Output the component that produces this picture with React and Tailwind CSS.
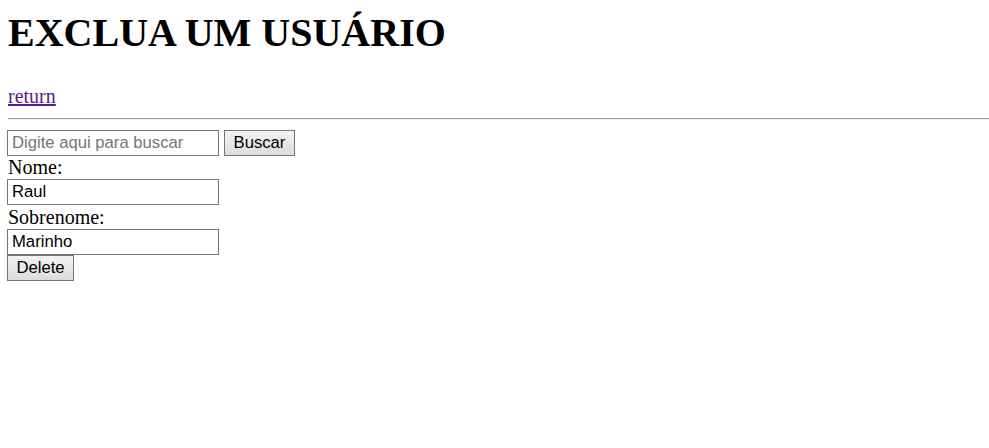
export default function App() {
  const serif = { fontFamily: '"Liberation Serif", "Times New Roman", serif' };
  const inputCls =
    "block box-border h-[26px] w-[212px] border border-[#767676] bg-white px-[4px] text-[16.67px] leading-none text-black outline-none placeholder:text-[#757575] font-['Liberation_Sans',Arial,sans-serif]";
  const btnCls =
    "box-border h-[26px] border border-[#767676] bg-[linear-gradient(#f2f2f2,#dcdcdc)] text-[16.67px] leading-none text-black font-['Liberation_Sans',Arial,sans-serif]";
  return (
    <div className="min-h-[448px] bg-white pt-[10px] text-[20px] text-black" style={serif}>
      <h1 className="m-0 pl-2 text-[40px] font-bold leading-[46px]">EXCLUA UM USUÁRIO</h1>
      <div className="mt-[29px] pl-2 leading-[23px]">
        <a href="#" className="text-[#551a8b] underline">return</a>
      </div>
      <div className="ml-2 mt-[10px] h-[2px] border-t border-b border-t-[#9a9a9a] border-b-[#eeeeee]" />
      <div className="mt-[10px] pl-[7px]">
        <div className="flex items-center gap-[5px]">
          <input className={inputCls} placeholder="Digite aqui para buscar" />
          <button className={btnCls + " w-[71px]"}>Buscar</button>
        </div>
        <div className="leading-[23px] pl-px">Nome:</div>
        <input className={inputCls} defaultValue="Raul" />
        <div className="leading-[24px] pl-px">Sobrenome:</div>
        <input className={inputCls} defaultValue="Marinho" />
        <button className={btnCls + " block w-[67px]"}>Delete</button>
      </div>
    </div>
  );
}
